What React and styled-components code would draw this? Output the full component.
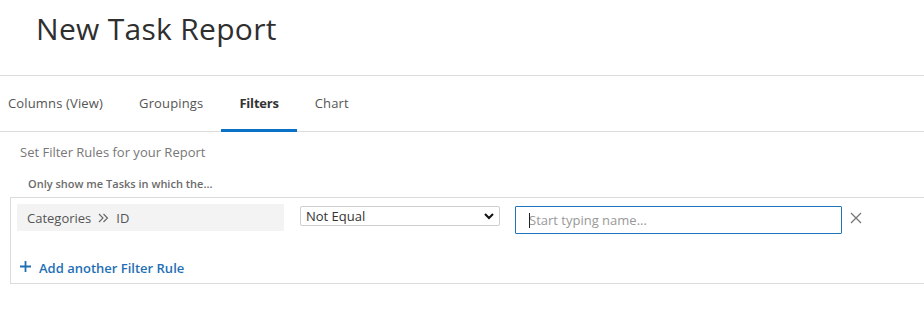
import React from 'react';
import styled, { createGlobalStyle } from 'styled-components';

const Global = createGlobalStyle`
  body {
    margin: 0;
    background: #fff;
    font-family: "Open Sans", "Liberation Sans", sans-serif;
    color: #444;
    overflow: hidden;
  }
`;

const Page = styled.div`
  width: 924px;
`;

const Header = styled.div`
  height: 76px;
  border-bottom: 1px solid #dcdcdc;
  padding-left: 36px;
  box-sizing: border-box;
`;

const Title = styled.h1`
  margin: 0;
  padding-top: 8px;
  font-size: 30px;
  font-weight: 400;
  color: #2f2f2f;
  letter-spacing: 0.3px;
`;

const Tabs = styled.nav`
  display: flex;
  height: 55px;
  border-bottom: 1px solid #dcdcdc;
  margin-left: -10px;
`;

const Tab = styled.div`
  display: flex;
  align-items: center;
  padding: 0 18px;
  font-size: 13px;
  letter-spacing: ${p => (p.active ? '-0.2px' : '0.15px')};
  font-weight: ${p => (p.active ? 700 : 400)};
  color: ${p => (p.active ? '#333' : '#555')};
  border-bottom: 3px solid ${p => (p.active ? '#0a70c8' : 'transparent')};
  margin-bottom: -1px;
  padding-top: 1px;
`;

const Content = styled.div`
  padding: 11px 0 0 10px;
`;

const Intro = styled.div`
  font-size: 13px;
  color: #777;
  padding-left: 10px;
  height: 18px;
  line-height: 18px;
`;

const Hint = styled.div`
  font-size: 11px;
  font-weight: 600;
  color: #6b6b6b;
  padding-left: 18px;
  margin-top: 15px;
  height: 16px;
  line-height: 16px;
`;

const RuleBox = styled.div`
  margin-top: 5px;
  width: 930px;
  height: 87px;
  box-sizing: border-box;
  border: 1px solid #dcdcdc;
  border-right: none;
  padding: 6px 0 0 6px;
`;

const Row = styled.div`
  display: flex;
  align-items: flex-start;
`;

const Field = styled.div`
  width: 267px;
  height: 27px;
  background: #f3f3f3;
  display: flex;
  align-items: center;
  padding-left: 10px;
  box-sizing: border-box;
  font-size: 13px;
  color: #555;
  gap: 7px;
`;

const SelectWrap = styled.div`
  position: relative;
  margin: 2px 0 0 16px;
  width: 200px;
  height: 20px;
`;

const Select = styled.select`
  appearance: none;
  display: block;
  width: 100%;
  height: 100%;
  border: 1px solid #cfcfcf;
  border-radius: 2px;
  background: #fff;
  font-family: inherit;
  font-size: 13px;
  color: #333;
  padding: 0 0 0 5px;
  box-sizing: border-box;
`;

const Chevron = styled.svg`
  position: absolute;
  right: 6px;
  top: 7px;
  pointer-events: none;
`;

const InputWrap = styled.div`
  position: relative;
  margin: 2px 0 0 15px;
  width: 327px;
  height: 28px;
`;

const Input = styled.input`
  display: block;
  width: 100%;
  height: 100%;
  box-sizing: border-box;
  border: 1px solid #1f75bb;
  border-radius: 1px;
  padding: 0 0 0 13px;
  font-family: inherit;
  font-size: 13px;
  outline: none;
  &::placeholder {
    color: #999;
  }
`;

const Caret = styled.span`
  position: absolute;
  left: 14px;
  top: 7px;
  width: 1px;
  height: 15px;
  background: #222;
`;

const Remove = styled.svg`
  margin: 8px 0 0 8px;
`;

const AddLink = styled.a`
  display: flex;
  align-items: center;
  gap: 8px;
  margin-top: 25px;
  margin-left: 3px;
  font-size: 13px;
  font-weight: 600;
  color: #1f6fb5;
  text-decoration: none;
  cursor: pointer;
`;

const Plus = styled.svg`
  margin-top: -3px;
`;

export default function App() {
  return (
    <Page>
      <Global />
      <Header>
        <Title>New Task Report</Title>
      </Header>
      <Tabs>
        <Tab>Columns (View)</Tab>
        <Tab>Groupings</Tab>
        <Tab active>Filters</Tab>
        <Tab>Chart</Tab>
      </Tabs>
      <Content>
        <Intro>Set Filter Rules for your Report</Intro>
        <Hint>Only show me Tasks in which the...</Hint>
        <RuleBox>
          <Row>
            <Field>
              <span>Categories</span>
              <svg width="11" height="10" viewBox="0 0 11 10">
                <path d="M1 1l4 4-4 4M5.5 1l4 4-4 4" fill="none" stroke="#666" strokeWidth="1.1" />
              </svg>
              <span>ID</span>
            </Field>
            <SelectWrap>
              <Select defaultValue="ne">
                <option value="eq">Equal</option>
                <option value="ne">Not Equal</option>
              </Select>
              <Chevron width="10" height="7" viewBox="0 0 10 7">
                <path d="M1 1l4 4 4-4" fill="none" stroke="#111" strokeWidth="2" />
              </Chevron>
            </SelectWrap>
            <InputWrap>
              <Input placeholder="Start typing name..." />
              <Caret />
            </InputWrap>
            <Remove width="12" height="12" viewBox="0 0 12 12">
              <path d="M1 1l10 10M11 1L1 11" stroke="#777" strokeWidth="1.3" />
            </Remove>
          </Row>
          <AddLink>
            <Plus width="11" height="11" viewBox="0 0 11 11">
              <path d="M5.5 0v11M0 5.5h11" stroke="#1f6fb5" strokeWidth="1.8" />
            </Plus>
            <span>Add another Filter Rule</span>
          </AddLink>
        </RuleBox>
      </Content>
    </Page>
  );
}
